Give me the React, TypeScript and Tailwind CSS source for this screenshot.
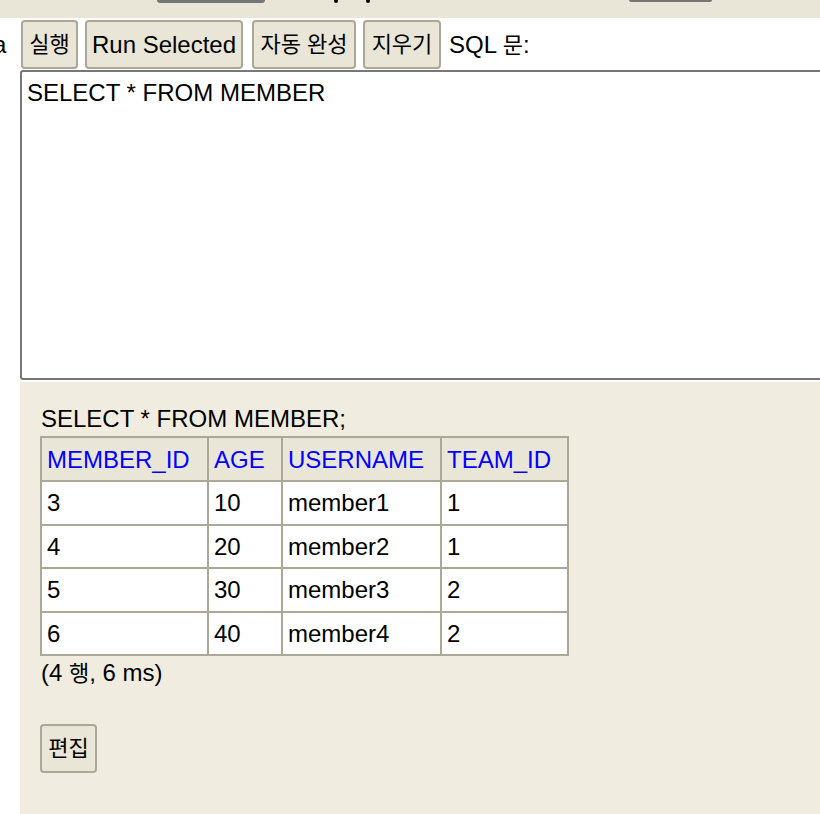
import React from "react";

const K = ({ children }: { children: React.ReactNode }) => (
  <span className="text-[22px]">{children}</span>
);

const Btn = ({ w, children }: { w: string; children: React.ReactNode }) => (
  <div
    className={`${w} h-[49px] shrink-0 flex items-center justify-center rounded-[4px] border-2 border-[#aba897] bg-[#e9e6d8] text-black`}
  >
    {children}
  </div>
);

const rows = [
  ["3", "10", "member1", "1"],
  ["4", "20", "member2", "1"],
  ["5", "30", "member3", "2"],
  ["6", "40", "member4", "2"],
];

export default function App() {
  return (
    <div
      className="w-[820px] h-[814px] overflow-hidden bg-white text-black text-[24px] leading-[27px] flex flex-col"
      style={{ fontFamily: '"Liberation Sans", "Noto Sans CJK KR", sans-serif' }}
    >
      {/* top band (cropped) */}
      <div className="h-[18px] shrink-0 bg-[#e9e6d8] flex items-start">
        <div className="ml-[157px] w-[108px] h-[3px] bg-[#777] rounded-b-[3px]" />
        <div className="ml-[69px] w-[4px] h-[3px] bg-black rounded-b-full" />
        <div className="ml-[28px] w-[4px] h-[3px] bg-black rounded-b-full" />
        <div className="ml-[259px] w-[83px] h-[2px] bg-[#777] rounded-b-[2px]" />
      </div>

      {/* toolbar */}
      <div className="mt-[2px] h-[49px] shrink-0 flex items-center">
        <span className="-ml-[7px] w-[13px]">a</span>
        <div className="ml-[15px] flex items-center">
          <Btn w="w-[57px]"><K>실행</K></Btn>
          <div className="ml-[7px]"><Btn w="w-[158px]">Run Selected</Btn></div>
          <div className="ml-[9px]"><Btn w="w-[104px]"><K>자동 완성</K></Btn></div>
          <div className="ml-[7px]"><Btn w="w-[78px]"><K>지우기</K></Btn></div>
          <span className="ml-[8px]">
            SQL <K>문</K>:
          </span>
        </div>
      </div>

      {/* textarea */}
      <div className="ml-[20px] mt-[1px] w-[820px] h-[310px] shrink-0 border-2 border-[#777] rounded-[3px] px-[5px] pt-[7px] bg-white">
        SELECT * FROM MEMBER
      </div>

      {/* result panel */}
      <div className="ml-[20px] mt-[2px] flex-1 bg-[#f0ede0] pl-[20px] pt-[23px]">
        <div className="pl-[1px]">SELECT * FROM MEMBER;</div>
        <table className="mt-[4px] border-collapse table-fixed w-[527px]">
          <colgroup>
            <col className="w-[167px]" />
            <col className="w-[74px]" />
            <col className="w-[159px]" />
            <col className="w-[127px]" />
          </colgroup>
          <thead>
            <tr className="h-[44px] bg-[#e9e6d8]">
              {["MEMBER_ID", "AGE", "USERNAME", "TEAM_ID"].map((h) => (
                <th
                  key={h}
                  className="border-2 border-[#aba897] text-left font-normal text-[#0000ff] px-[5px] py-0"
                >
                  {h}
                </th>
              ))}
            </tr>
          </thead>
          <tbody>
            {rows.map((r, i) => (
              <tr key={i} className="h-[43.5px] bg-white">
                {r.map((c, j) => (
                  <td key={j} className="border-2 border-[#aba897] px-[5px] py-0">
                    {c}
                  </td>
                ))}
              </tr>
            ))}
          </tbody>
        </table>
        <div className="mt-[3px] pl-[1px]">
          (4 <K>행</K>, 6 ms)
        </div>
        <div className="mt-[37px]">
          <Btn w="w-[57px]"><K>편집</K></Btn>
        </div>
      </div>
    </div>
  );
}
